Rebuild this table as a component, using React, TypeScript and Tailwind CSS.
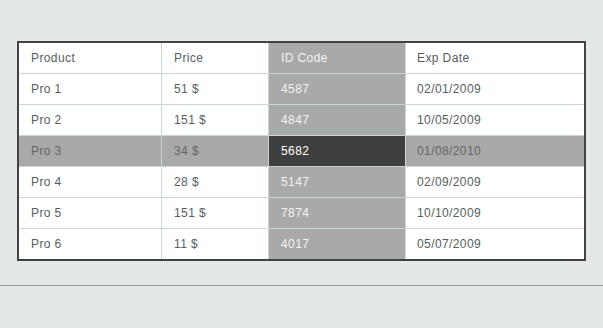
const rows = [
  { name: 'Pro 1', price: '51 $', id: '4587', date: '02/01/2009' },
  { name: 'Pro 2', price: '151 $', id: '4847', date: '10/05/2009' },
  { name: 'Pro 3', price: '34 $', id: '5682', date: '01/08/2010', active: true },
  { name: 'Pro 4', price: '28 $', id: '5147', date: '02/09/2009' },
  { name: 'Pro 5', price: '151 $', id: '7874', date: '10/10/2009' },
  { name: 'Pro 6', price: '11 $', id: '4017', date: '05/07/2009' },
];

const cell = 'flex items-center px-3 h-[30px]';

export default function App() {
  return (
    <div className="min-h-screen bg-[#e4e8e6] pt-[41px] font-['Liberation_Sans',Arial,sans-serif] text-[12px] tracking-[0.4px]">
      <div className="ml-[17px] w-[569px] border-2 border-[#434343]">
        <div className="grid grid-cols-[142px_106px_136px_178px] gap-px bg-[#c7d7d4]">
          <div className={`${cell} bg-white text-[#55605e]`}>Product</div>
          <div className={`${cell} bg-white text-[#55605e]`}>Price</div>
          <div className={`${cell} bg-[#a9a9a9] text-[#f3f3f3]`}>ID Code</div>
          <div className={`${cell} bg-white text-[#55605e] pl-[11px]`}>Exp Date</div>

          {rows.map((r) => (
            <div key={r.id} className="contents">
              <div className={`${cell} ${r.active ? 'bg-[#a9a9a9] text-[#5f6665]' : 'bg-white text-[#55605e]'}`}>{r.name}</div>
              <div className={`${cell} ${r.active ? 'bg-[#a9a9a9] text-[#5f6665]' : 'bg-white text-[#55605e]'}`}>{r.price}</div>
              <div className={`${cell} ${r.active ? 'bg-[#3f3f3f] text-white' : 'bg-[#a9a9a9] text-[#f3f3f3]'}`}>{r.id}</div>
              <div className={`${cell} pl-[11px] ${r.active ? 'bg-[#a9a9a9] text-[#5f6665]' : 'bg-white text-[#55605e]'}`}>{r.date}</div>
            </div>
          ))}
        </div>
      </div>
      <div className="mt-6 h-px bg-[#9c9e9d]" />
    </div>
  );
}
